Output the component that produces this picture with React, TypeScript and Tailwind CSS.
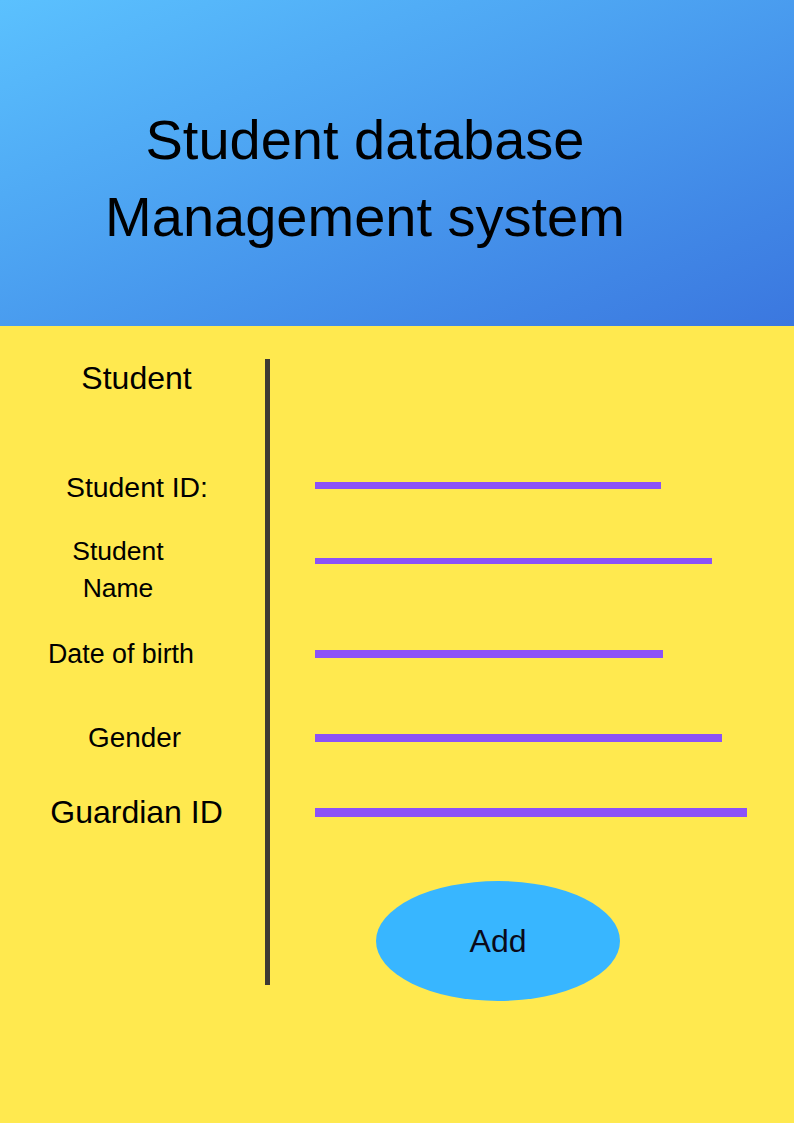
import React from "react";

const font = { fontFamily: '"Liberation Sans", Arial, sans-serif' };

export default function App() {
  return (
    <div className="w-[794px] h-[1123px] flex flex-col bg-[#ffe94f] text-black" style={font}>
      <header className="h-[326px] shrink-0 bg-linear-to-br from-[#5bc1fe] to-[#3b77df] pt-[101px] pr-[64px]">
        <h1 className="text-center text-[56px] leading-[77px] font-normal">
          Student database
          <br />
          Management system
        </h1>
      </header>

      <main className="flex flex-row pt-[33px]">
        <div className="w-[265px] shrink-0 flex flex-col">
          <div className="w-[273px] text-center text-[32px] leading-[38px]">Student</div>
          <div className="w-[274px] mt-[72px] text-center text-[28.4px] leading-[36px]">Student ID:</div>
          <div className="w-[236px] mt-[28px] text-center text-[26.5px] leading-[37px]">
            Student
            <br />
            Name
          </div>
          <div className="w-[242px] mt-[29px] text-center text-[26.8px] leading-[36px]">Date of birth</div>
          <div className="w-[269px] mt-[48px] text-center text-[27.9px] leading-[36px]">Gender</div>
          <div className="w-[273px] mt-[38px] text-center text-[32px] leading-[36px]">Guardian ID</div>
        </div>

        <div className="w-[5px] h-[626px] shrink-0 bg-[#3d3a33]" />

        <div className="flex flex-col pl-[45px]">
          <div className="mt-[123px] w-[346px] h-[7px] bg-[#8c52f7]" />
          <div className="mt-[69px] w-[397px] h-[6px] bg-[#8c52f7]" />
          <div className="mt-[86px] w-[348px] h-[8px] bg-[#8c52f7]" />
          <div className="mt-[76px] w-[407px] h-[8px] bg-[#8c52f7]" />
          <div className="mt-[66px] w-[432px] h-[9px] bg-[#8c52f7]" />
          <button className="mt-[64px] ml-[61px] w-[244px] h-[120px] rounded-[50%] bg-[#38b6ff] flex items-center justify-center text-[32px] leading-none text-[#0a0a1a]">
            Add
          </button>
        </div>
      </main>
    </div>
  );
}
